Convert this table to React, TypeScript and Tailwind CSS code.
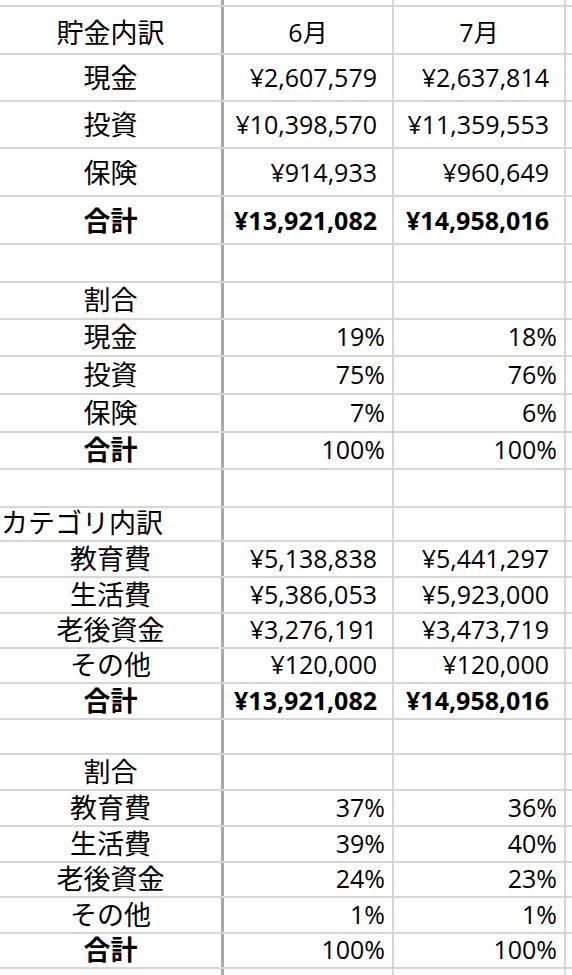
import React from 'react';

type Row = {
  h: string;
  pb?: string;
  label?: string;
  june?: string;
  july?: string;
  bold?: boolean;
  left?: boolean;
  kind?: 'head' | 'cur' | 'pct';
};

// row heights follow the sheet's uneven row sizes
const rows: Row[] = [
  { h: 'h-[7px]' },
  { h: 'h-[48px]', pb: 'pb-[8px]', label: '貯金内訳', june: '6月', july: '7月', kind: 'head' },
  { h: 'h-[47px]', pb: 'pb-[10px]', label: '現金', june: '¥2,607,579', july: '¥2,637,814', kind: 'cur' },
  { h: 'h-[47px]', pb: 'pb-[10px]', label: '投資', june: '¥10,398,570', july: '¥11,359,553', kind: 'cur' },
  { h: 'h-[48px]', pb: 'pb-[10px]', label: '保険', june: '¥914,933', july: '¥960,649', kind: 'cur' },
  { h: 'h-[48px]', pb: 'pb-[10px]', label: '合計', june: '¥13,921,082', july: '¥14,958,016', kind: 'cur', bold: true },
  { h: 'h-[38px]' },
  { h: 'h-[37px]', pb: 'pb-[6px]', label: '割合' },
  { h: 'h-[37px]', pb: 'pb-[6px]', label: '現金', june: '19%', july: '18%', kind: 'pct' },
  { h: 'h-[38px]', pb: 'pb-[6px]', label: '投資', june: '75%', july: '76%', kind: 'pct' },
  { h: 'h-[38px]', pb: 'pb-[6px]', label: '保険', june: '7%', july: '6%', kind: 'pct' },
  { h: 'h-[37px]', pb: 'pb-[6px]', label: '合計', june: '100%', july: '100%', kind: 'pct', bold: true },
  { h: 'h-[38px]' },
  { h: 'h-[34px]', pb: 'pb-[5px]', label: 'カテゴリ内訳', left: true },
  { h: 'h-[36px]', pb: 'pb-[5px]', label: '教育費', june: '¥5,138,838', july: '¥5,441,297', kind: 'cur' },
  { h: 'h-[36px]', pb: 'pb-[5px]', label: '生活費', june: '¥5,386,053', july: '¥5,923,000', kind: 'cur' },
  { h: 'h-[35px]', pb: 'pb-[5px]', label: '老後資金', june: '¥3,276,191', july: '¥3,473,719', kind: 'cur' },
  { h: 'h-[35px]', pb: 'pb-[5px]', label: 'その他', june: '¥120,000', july: '¥120,000', kind: 'cur' },
  { h: 'h-[36px]', pb: 'pb-[5px]', label: '合計', june: '¥13,921,082', july: '¥14,958,016', kind: 'cur', bold: true },
  { h: 'h-[35px]' },
  { h: 'h-[36px]', pb: 'pb-[5px]', label: '割合' },
  { h: 'h-[36px]', pb: 'pb-[5px]', label: '教育費', june: '37%', july: '36%', kind: 'pct' },
  { h: 'h-[36px]', pb: 'pb-[5px]', label: '生活費', june: '39%', july: '40%', kind: 'pct' },
  { h: 'h-[35px]', pb: 'pb-[5px]', label: '老後資金', june: '24%', july: '23%', kind: 'pct' },
  { h: 'h-[36px]', pb: 'pb-[5px]', label: 'その他', june: '1%', july: '1%', kind: 'pct' },
  { h: 'h-[35px]', pb: 'pb-[5px]', label: '合計', june: '100%', july: '100%', kind: 'pct', bold: true },
  { h: 'h-[30px]' },
];

const valueAlign = (kind?: Row['kind']) => {
  if (kind === 'head') return 'justify-center';
  if (kind === 'pct') return 'justify-end pr-[7px]';
  return 'justify-end pr-[15px]';
};

const ValueCell = ({ r, value, width }: { r: Row; value?: string; width: string }) => (
  <div
    className={`${width} shrink-0 flex items-end border-r-2 border-[#d6d6d6] text-[25px] leading-none whitespace-nowrap ${valueAlign(r.kind)} ${r.pb ?? ''} ${
      r.bold && r.kind === 'cur' ? 'font-bold' : ''
    }`}
  >
    {value}
  </div>
);

const App = () => {
  return (
    <div className="w-[572px] h-[975px] overflow-hidden bg-white text-black font-['Open_Sans','Noto_Sans_CJK_JP',sans-serif]">
      {rows.map((r, i) => (
        <div key={i} className={`${r.h} flex border-b-2 border-[#d6d6d6] box-border`}>
          <div
            className={`w-[224px] shrink-0 flex items-end border-r-[3px] border-[#a9a9a9] text-[27px] leading-none whitespace-nowrap font-['Noto_Sans_CJK_JP',sans-serif] ${r.pb ?? ''} ${
              r.left ? 'justify-start pl-[1px]' : 'justify-center'
            } ${r.bold ? 'font-bold' : ''}`}
          >
            {r.label}
          </div>
          <ValueCell r={r} value={r.june} width="w-[170px]" />
          <ValueCell r={r} value={r.july} width="w-[172px]" />
          <div className="flex-1" />
        </div>
      ))}
    </div>
  );
};

export default App;
